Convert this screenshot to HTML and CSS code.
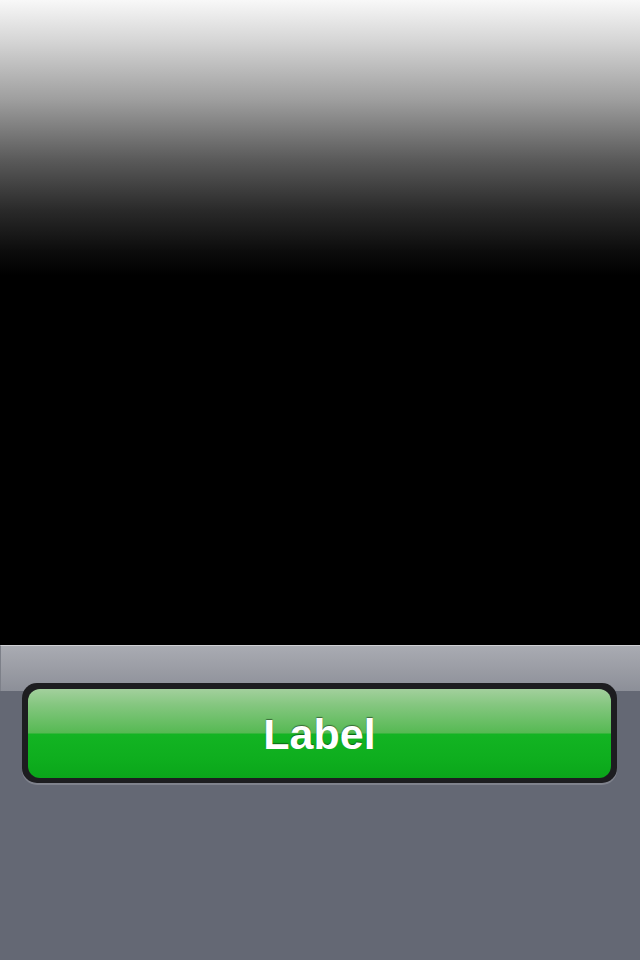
FILE: index.html
```html
<!DOCTYPE html>
<html>
<head>
<meta charset="utf-8">
<link rel="stylesheet" href="styles.css">
</head>
<body>
<div class="screen">
  <div class="content"></div>
  <div class="toolbar">
    <div class="bar"></div>
    <div class="well">
      <button class="btn">Label</button>
    </div>
  </div>
</div>
</body>
</html>
```
FILE: styles.css
```css
html, body {
  margin: 0;
  padding: 0;
  background: #000;
}
.screen {
  width: 640px;
  height: 960px;
  display: flex;
  flex-direction: column;
  position: relative;
}
.content {
  height: 645px;
  background: linear-gradient(to bottom, #f8f8f8 0px, #d6d6d6 40px, #9e9e9e 100px, #5a5a5a 160px, #2a2a2a 210px, #0d0d0d 250px, #000 275px, #000 100%);
}
.toolbar {
  flex: 1;
  background: #646874;
  position: relative;
}
.bar {
  height: 46px;
  border-top: 1px solid #cfd0d4;
  background: linear-gradient(to bottom, #a9abb2 0%, #9b9da5 50%, #8c8f98 100%);
  box-sizing: border-box;
  border-left: 1px solid #7d8089;
}
.well {
  position: absolute;
  left: 22px;
  top: 38px;
  width: 595px;
  height: 100px;
  box-sizing: border-box;
  border-radius: 15px;
  background: #1d1d20;
  padding: 6px;
  box-shadow: 0 2px 0 rgba(160, 162, 170, 0.45);
}
.btn {
  display: flex;
  align-items: center;
  justify-content: center;
  width: 100%;
  height: 89px;
  margin: 0;
  border: 0;
  border-radius: 12px;
  padding: 2px 0 0 0;
  background: linear-gradient(to bottom, #a3d09d 0px, #86c781 15px, #56b953 44px, #13b423 45px, #0eae1e 70px, #0aa61a 89px);
  color: #fff;
  font-family: "Liberation Sans", Arial, sans-serif;
  font-weight: bold;
  font-size: 43px;
  text-shadow: 0 -1px 1px rgba(0, 0, 0, 0.45);
  cursor: pointer;
}
```
